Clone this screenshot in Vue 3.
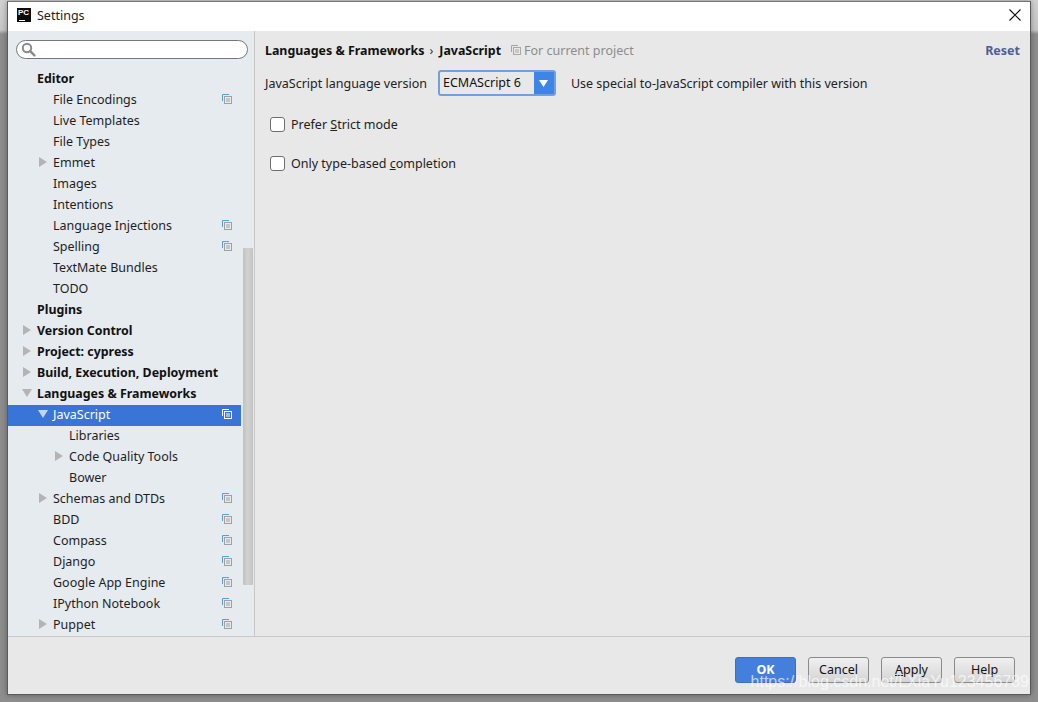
<script setup>
const rows = [
  { t: 'Editor', l: 0, b: true },
  { t: 'File Encodings', l: 1, p: true },
  { t: 'Live Templates', l: 1 },
  { t: 'File Types', l: 1 },
  { t: 'Emmet', l: 1, a: 'r' },
  { t: 'Images', l: 1 },
  { t: 'Intentions', l: 1 },
  { t: 'Language Injections', l: 1, p: true },
  { t: 'Spelling', l: 1, p: true },
  { t: 'TextMate Bundles', l: 1 },
  { t: 'TODO', l: 1 },
  { t: 'Plugins', l: 0, b: true },
  { t: 'Version Control', l: 0, b: true, a: 'r' },
  { t: 'Project: cypress', l: 0, b: true, a: 'r' },
  { t: 'Build, Execution, Deployment', l: 0, b: true, a: 'r' },
  { t: 'Languages & Frameworks', l: 0, b: true, a: 'd' },
  { t: 'JavaScript', l: 1, a: 'd', p: true, sel: true },
  { t: 'Libraries', l: 2 },
  { t: 'Code Quality Tools', l: 2, a: 'r' },
  { t: 'Bower', l: 2 },
  { t: 'Schemas and DTDs', l: 1, a: 'r', p: true },
  { t: 'BDD', l: 1, p: true },
  { t: 'Compass', l: 1, p: true },
  { t: 'Django', l: 1, p: true },
  { t: 'Google App Engine', l: 1, p: true },
  { t: 'IPython Notebook', l: 1, p: true },
  { t: 'Puppet', l: 1, a: 'r', p: true }
]
</script>

<template>
  <div class="page">
    <div class="window">
      <header class="titlebar">
        <div class="logo"><span class="logo-text">PC</span><span class="logo-bar"></span></div>
        <span class="title">Settings</span>
        <svg class="close" width="12" height="12" viewBox="0 0 12 12">
          <path d="M.5.5l11 11M11.5.5l-11 11" stroke="#111" stroke-width="1.1" fill="none" />
        </svg>
      </header>
      <div class="main">
        <aside class="sidebar">
          <div class="search">
            <svg width="15" height="15" viewBox="0 0 15 15">
              <circle cx="6" cy="6" r="4.2" fill="none" stroke="#8a8a8a" stroke-width="2" />
              <path d="M9.2 9.2l4.2 4.2" stroke="#8a8a8a" stroke-width="2.4" stroke-linecap="round" />
            </svg>
          </div>
          <div class="tree">
            <div
              v-for="r in rows"
              :key="r.t"
              class="row"
              :class="['level' + r.l, { selected: r.sel, bold: r.b }]"
            >
              <span class="arrow-slot">
                <svg v-if="r.a === 'r'" width="10" height="10" viewBox="0 0 10 10"><path d="M1 0l8 5-8 5z" fill="#b4b4b4" /></svg>
                <svg v-if="r.a === 'd'" width="10" height="10" viewBox="0 0 10 10"><path d="M0 1h10l-5 8z" :fill="r.sel ? '#c5d3ea' : '#b4b4b4'" /></svg>
              </span>
              <span class="label">{{ r.t }}</span>
              <svg v-if="r.p" class="proj" width="10" height="10" viewBox="0 0 10 10">
                <path d="M.5 7V.5H7" fill="none" :stroke="r.sel ? '#fff' : '#5a9fd0'" />
                <rect x="2.5" y="2.5" width="7" height="7" fill="none" :stroke="r.sel ? '#fff' : '#a0a0a0'" />
                <path d="M4 5h4M4 7h4" :stroke="r.sel ? '#fff' : '#a0a0a0'" />
              </svg>
            </div>
          </div>
          <div class="scroll-thumb"></div>
        </aside>
        <section class="content">
          <div class="crumbs">
            <b>Languages &amp; Frameworks</b>
            <span class="sep">›</span>
            <b>JavaScript</b>
            <svg class="crumb-icon" width="10" height="10" viewBox="0 0 10 10">
              <path d="M.5 7V.5H7" fill="none" stroke="#9aa5ad" />
              <rect x="2.5" y="2.5" width="7" height="7" fill="none" stroke="#a8a8a8" />
              <path d="M4 5h4M4 7h4" stroke="#a8a8a8" />
            </svg>
            <span class="current">For current project</span>
            <a class="reset">Reset</a>
          </div>
          <div class="version">
            <span>JavaScript language version</span>
            <div class="combo">
              <span class="combo-value">ECMAScript 6</span>
              <span class="combo-btn">
                <svg width="9" height="7" viewBox="0 0 9 7"><path d="M0 0h9L4.5 7z" fill="#fff" /></svg>
              </span>
            </div>
            <span>Use special to-JavaScript compiler with this version</span>
          </div>
          <label class="check first"><span class="box"></span><span>Prefer <u>S</u>trict mode</span></label>
          <label class="check"><span class="box"></span><span>Only type-based <u>c</u>ompletion</span></label>
        </section>
      </div>
      <footer class="footer">
        <button class="btn ok">OK</button>
        <button class="btn">Cancel</button>
        <button class="btn"><u>A</u>pply</button>
        <button class="btn">Help</button>
        <span class="watermark">https://blog.csdn.net/LXiaYu123456789</span>
      </footer>
    </div>
  </div>
</template>

<style>
html, body { margin: 0; height: 100%; overflow: hidden; }
</style>

<style scoped>
.page {
  width: 1038px;
  height: 702px;
  box-sizing: border-box;
  padding: 1px 7px 7px 7px;
  background: linear-gradient(180deg, #d2d2d2 0, #c6c6c6 30px, #8e8e8e 34px, #8e8e8e 100%);
  font-family: "Noto Sans", "Open Sans", sans-serif;
  font-size: 12.5px;
  color: #1a1a1a;
}
.window {
  height: 100%;
  box-sizing: border-box;
  display: flex;
  flex-direction: column;
  position: relative;
  background: #e8e8e8;
  border: 1px solid #5a5a5a;
  border-top-color: #777;
  box-shadow: 0 0 6px rgba(0, 0, 0, 0.35);
}
.titlebar {
  height: 29px;
  flex: none;
  box-sizing: border-box;
  background: #fff;
  display: flex;
  align-items: center;
  padding: 0 8px 3px 9px;
}
.logo {
  width: 14px;
  height: 14px;
  background: #0c0c0c;
  position: relative;
  flex: none;
}
.logo-text {
  position: absolute;
  left: 1px;
  top: 1px;
  color: #fff;
  font: bold 8px/8px "Liberation Sans", sans-serif;
}
.logo-bar {
  position: absolute;
  left: 2px;
  bottom: 1px;
  width: 6px;
  height: 1px;
  background: #fff;
}
.title { margin-left: 6px; flex: 1; color: #222; }
.close { margin-right: 1px; }
.main { flex: 1; display: flex; min-height: 0; }
.sidebar {
  width: 246px;
  flex: none;
  position: relative;
  background: #e6ebf0;
  border-right: 1px solid #c8c8c8;
  overflow: hidden;
  display: flex;
  flex-direction: column;
}
.search {
  height: 19px;
  margin: 9px 6px 0 8px;
  box-sizing: border-box;
  width: 232px;
  background: #fff;
  border: 1px solid #777;
  border-radius: 11px;
  padding-left: 4px;
  display: flex;
  align-items: center;
  flex: none;
}
.tree { margin-top: 10px; width: 233px; flex: 1; overflow: hidden; }
.row {
  height: 21px;
  box-sizing: border-box;
  padding-bottom: 3px;
  display: flex;
  align-items: center;
  white-space: nowrap;
  color: #1e1e1e;
}
.row.bold { font-weight: 700; color: #111; font-size: 12.4px; }
.row.selected { background: #3875d7; color: #fff; }
.level0 { padding-left: 14px; }
.level1 { padding-left: 30px; }
.level2 { padding-left: 46px; }
.arrow-slot { width: 15px; margin-right: 0; flex: none; display: flex; align-items: center; }
.label { flex: 1; }
.proj { margin-right: 9px; flex: none; }
.scroll-thumb {
  position: absolute;
  left: 235px;
  top: 217px;
  width: 10px;
  height: 337px;
  background: linear-gradient(90deg, #c2c2c2, #d2d2d2 50%, #c2c2c2);
  border-radius: 1px;
}
.content { flex: 1; padding: 9px 10px 0 10px; min-width: 0; }
.crumbs { height: 20px; display: flex; align-items: center; color: #111; }
.crumbs b { font-size: 12.4px; }
.sep { margin: 0 6px 0 5px; color: #333; }
.crumb-icon { margin-left: 10px; }
.current { margin-left: 3px; color: #8c8c8c; flex: 1; }
.reset { font-weight: 700; color: #4f5f95; }
.version { display: flex; align-items: center; margin-top: 10px; height: 26px; color: #222; }
.combo {
  width: 118px;
  height: 26px;
  box-sizing: border-box;
  margin: 0 15px 0 11px;
  display: flex;
  border: 2px solid #6fa0e0;
  border-radius: 3px;
  background: #e8e8e8;
}
.combo-value { flex: 1; padding-left: 3px; line-height: 22px; color: #111; }
.combo-btn {
  width: 20px;
  background: #3f85e6;
  display: flex;
  align-items: center;
  justify-content: center;
}
.check { display: flex; align-items: center; height: 19px; margin-top: 20px; padding-left: 5px; color: #222; }
.check.first { margin-top: 19px; }
.box {
  width: 15px;
  height: 15px;
  box-sizing: border-box;
  border: 1px solid #6e6e6e;
  border-radius: 3px;
  background: #fff;
  margin-right: 6px;
  flex: none;
}
.footer {
  height: 58px;
  flex: none;
  box-sizing: border-box;
  border-top: 1px solid #c8c8c8;
  display: flex;
  align-items: flex-start;
  justify-content: flex-end;
  gap: 12px;
  padding: 20px 15px 0 0;
  position: relative;
}
.btn {
  width: 61px;
  height: 26px;
  padding: 0 0 2px;
  box-sizing: border-box;
  border: 1px solid #8a8a8a;
  border-radius: 3px;
  background: linear-gradient(180deg, #f0f0f0, #d4d4d4);
  font: 12.5px "Noto Sans", "Open Sans", sans-serif;
  color: #111;
}
.btn.ok {
  border-color: #3a70c8;
  background: #447fdb;
  color: #fff;
  font-weight: 700;
}
.watermark {
  position: absolute;
  right: 1px;
  top: 36px;
  font: 16px "Liberation Sans", sans-serif;
  color: rgba(255, 255, 255, 0.68);
  white-space: nowrap;
  pointer-events: none;
}
</style>
